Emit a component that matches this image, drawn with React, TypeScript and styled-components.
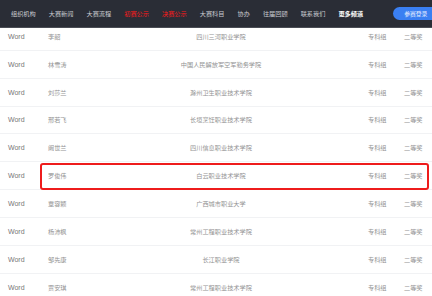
import React from 'react';
import styled, { createGlobalStyle } from 'styled-components';

const GlobalStyle = createGlobalStyle`
  html, body {
    margin: 0;
    padding: 0;
    background: #ffffff;
    overflow: hidden;
  }
  body {
    font-family: "Liberation Sans", "Noto Sans CJK SC", sans-serif;
  }
`;

const Page = styled.div`
  width: 432px;
  height: 296px;
  display: flex;
  flex-direction: column;
  overflow: hidden;
  background: #ffffff;
`;

const NavBar = styled.nav`
  position: relative;
  z-index: 2;
  flex: 0 0 auto;
  height: 27px;
  display: flex;
  align-items: center;
  padding-left: 11px;
  background: #2a2d36;
  border-bottom: 1px solid #4a4d55;
`;

const NavItem = styled.span<{ $variant?: 'red' | 'bold' }>`
  font-family: "Noto Sans CJK SC", sans-serif;
  font-size: 6.2px;
  white-space: nowrap;
  margin-right: ${(p) => (p.$variant === 'bold' ? '30px' : '13px')};
  color: ${(p) => (p.$variant === 'red' ? '#ff1a1a' : p.$variant === 'bold' ? '#ffffff' : '#c9cbd0')};
  font-weight: ${(p) => (p.$variant === 'bold' ? 700 : 400)};
`;

const LoginButton = styled.span`
  flex: 0 0 auto;
  height: 13px;
  padding: 0 6px 0 11px;
  display: flex;
  align-items: center;
  border-radius: 7px 0 0 7px;
  background: #3a7ff2;
  color: #e8efff;
  font-family: "Noto Sans CJK SC", sans-serif;
  font-size: 5.8px;
  white-space: nowrap;
`;

const Table = styled.div`
  flex: 1 1 auto;
  margin-top: -5px;
  display: flex;
  flex-direction: column;
`;

const Row = styled.div`
  position: relative;
  flex: 0 0 auto;
  height: 27.85px;
  display: grid;
  grid-template-columns: 40px 60px 226px 70px 1fr;
  align-items: center;
  padding-left: 8px;
  border-bottom: 1px solid #f1f2f4;
  box-sizing: border-box;
`;

const Cell = styled.span<{ $align?: 'center'; $pad?: number; $latin?: boolean }>`
  font-family: ${(p) => (p.$latin ? '"Liberation Sans", sans-serif' : '"Noto Sans CJK SC", sans-serif')};
  font-size: ${(p) => (p.$latin ? '7px' : '6.2px')};
  color: ${(p) => (p.$latin ? '#777777' : '#939393')};
  text-align: ${(p) => p.$align ?? 'left'};
  padding-left: ${(p) => p.$pad ?? 0}px;
  white-space: nowrap;
`;

const Highlight = styled.span`
  position: absolute;
  left: 40px;
  right: 3px;
  top: 1px;
  bottom: -1px;
  border: 2px solid #ee1c1c;
  border-radius: 3px;
  pointer-events: none;
`;

const FootStrip = styled.div`
  flex: 1 1 auto;
  background: #eef5f0;
  border-top: 1px solid #dcebe2;
`;

const navItems: { label: string; variant?: 'red' | 'bold' }[] = [
  { label: '组织机构' },
  { label: '大赛新闻' },
  { label: '大赛流程' },
  { label: '初赛公示', variant: 'red' },
  { label: '决赛公示', variant: 'red' },
  { label: '大赛科目' },
  { label: '协办' },
  { label: '往届回顾' },
  { label: '联系我们' },
  { label: '更多频道', variant: 'bold' },
];

const rows = [
  { name: '李韶', school: '四川三河职业学院' },
  { name: '林雪涛', school: '中国人民解放军空军勤务学院' },
  { name: '刘莎兰', school: '滁州卫生职业技术学院' },
  { name: '邢若飞', school: '长垣烹饪职业技术学院' },
  { name: '阚世兰', school: '四川信息职业技术学院' },
  { name: '罗俊伟', school: '白云职业技术学院', marked: true },
  { name: '覃容颖', school: '广西城市职业大学' },
  { name: '杨沛枫', school: '常州工程职业技术学院' },
  { name: '邹先康', school: '长江职业学院' },
  { name: '贾安琪', school: '常州工程职业技术学院' },
];

export default function App() {
  return (
    <>
      <GlobalStyle />
      <Page>
        <NavBar>
          {navItems.map((item) => (
            <NavItem key={item.label} $variant={item.variant}>
              {item.label}
            </NavItem>
          ))}
          <LoginButton>参赛登录</LoginButton>
        </NavBar>
        <Table>
          {rows.map((r) => (
            <Row key={r.name}>
              <Cell $latin>Word</Cell>
              <Cell>{r.name}</Cell>
              <Cell $align="center">{r.school}</Cell>
              <Cell $pad={34}>专科组</Cell>
              <Cell>二等奖</Cell>
              {r.marked && <Highlight />}
            </Row>
          ))}
          <FootStrip />
        </Table>
      </Page>
    </>
  );
}
